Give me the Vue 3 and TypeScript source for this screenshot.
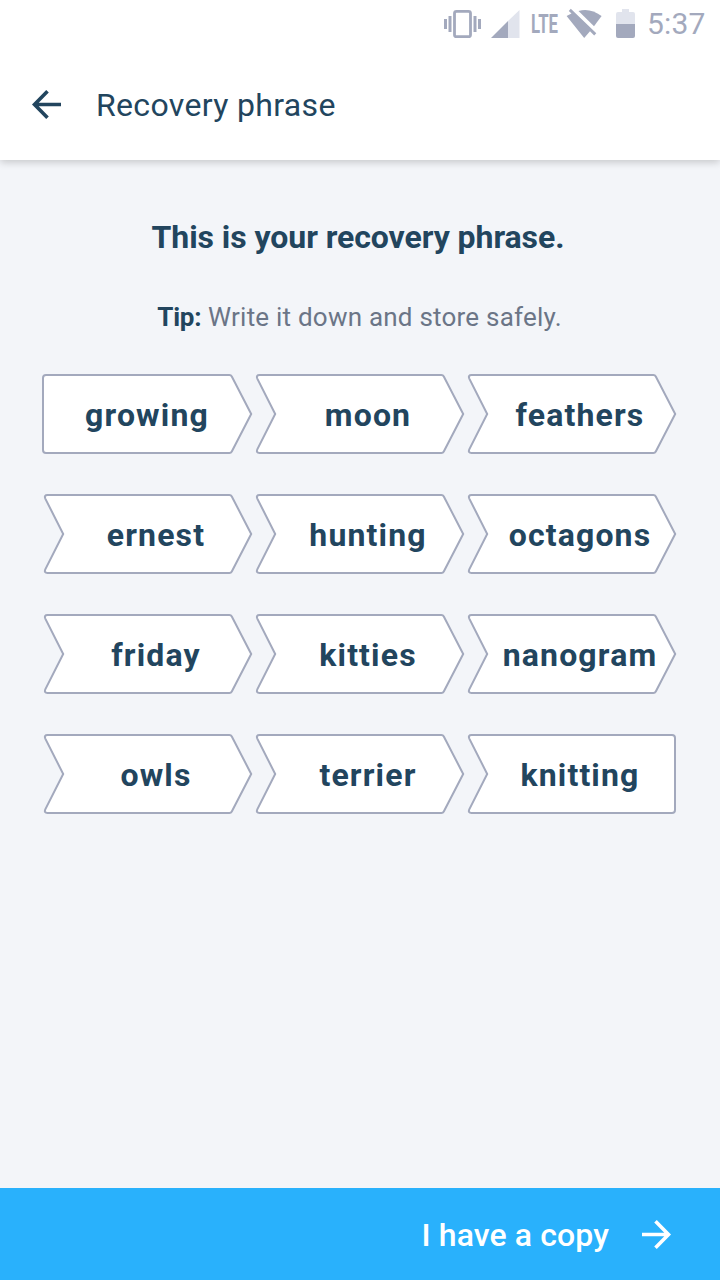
<script setup lang="ts">
interface Chip {
  word: string
  kind: 'first' | 'middle' | 'last'
}

const words: string[] = [
  'growing', 'moon', 'feathers',
  'ernest', 'hunting', 'octagons',
  'friday', 'kitties', 'nanogram',
  'owls', 'terrier', 'knitting',
]

const chips: Chip[] = words.map((word, i) => ({
  word,
  kind: i === 0 ? 'first' : i === words.length - 1 ? 'last' : 'middle',
}))

const outlines: Record<Chip['kind'], string> = {
  first: 'M4 1H187.4Q189 1 189.8 2.5L209.2 40L189.8 77.5Q189 79 187.4 79H4Q1 79 1 76V4Q1 1 4 1Z',
  middle: 'M5.5 1H187.4Q189 1 189.8 2.5L209.2 40L189.8 77.5Q189 79 187.4 79H5.5Q1.8 79 3.3 75.4L21.2 40L3.3 4.6Q1.8 1 5.5 1Z',
  last: 'M5.5 1H206Q209 1 209 4V76Q209 79 206 79H5.5Q1.8 79 3.3 75.4L21.2 40L3.3 4.6Q1.8 1 5.5 1Z',
}
</script>

<template>
  <div class="screen">
    <header class="top">
      <div class="status">
        <svg class="status-icons" width="200" height="48" viewBox="440 0 200 48">
          <g fill="#a3a9bd">
            <rect x="444" y="19" width="3" height="10" />
            <rect x="448.5" y="16" width="3" height="16" />
            <rect x="473.5" y="16" width="3" height="16" />
            <rect x="478" y="19" width="3" height="10" />
            <path d="M491 38L508 21V38Z" />
            <path d="M616 24H635V36Q635 38 633 38H618Q616 38 616 36Z" />
            <path d="M568.800 11L570.800 8.800L596.300 33.300L594.200 35.500L590 31.300L584.200 38L566.600 16L571.500 13.500Z" />
            <path d="M578.500 11Q590 7.500 601.600 16L594 26.300Z" />
          </g>
          <rect x="454.500" y="11.300" width="16" height="25.400" rx="2" fill="#fff" stroke="#a3a9bd" stroke-width="2.800" />
          <path d="M508 21L519.500 10V38H508Z" fill="#e1e4ed" />
          <path d="M616 24V14Q616 12 618 12H622V9H629V12H633Q635 12 635 14V24Z" fill="#e1e4ed" />
          <text x="531" y="33" textLength="27" lengthAdjust="spacingAndGlyphs" class="network">LTE</text>
        </svg>
        <time class="clock">5:37</time>
      </div>
      <div class="bar">
        <svg class="back" width="32" height="32" viewBox="0 0 32 32">
          <path d="M31 16.500H5M17.500 3.200L4.500 16.500L17.500 29.800" />
        </svg>
        <span class="title">Recovery phrase</span>
      </div>
    </header>

    <main class="content">
      <h1 class="heading">This is your recovery phrase.</h1>
      <p class="tip"><strong>Tip:</strong> Write it down and store safely.</p>
      <div class="phrase">
        <div v-for="chip in chips" :key="chip.word" class="chip" :class="chip.kind">
          <svg class="outline" width="212" height="80" viewBox="0 0 212 80">
            <path :d="outlines[chip.kind]" />
          </svg>
          <span class="word">{{ chip.word }}</span>
        </div>
      </div>
    </main>

    <button class="confirm" type="button">
      <span>I have a copy</span>
      <svg class="next" width="32" height="32" viewBox="0 0 32 32">
        <path d="M2 16.500H28M15.500 3.200L28.500 16.500L15.500 29.800" />
      </svg>
    </button>
  </div>
</template>

<style>
body {
  margin: 0;
}
</style>

<style scoped>
.screen {
  width: 720px;
  height: 1280px;
  display: flex;
  flex-direction: column;
  background: #f3f5f9;
  color: #22455e;
  font-family: Roboto, "Liberation Sans", sans-serif;
  overflow: hidden;
}
.top {
  height: 160px;
  flex: none;
  background: #fff;
  box-shadow: 0 2px 8px rgba(0, 0, 0, 0.2);
}
.status {
  height: 48px;
  display: flex;
  align-items: center;
  padding-left: 440px;
}
.status-icons {
  flex: none;
}
.network {
  font-size: 25px;
  font-weight: 700;
  fill: #a3a9bd;
}
.clock {
  margin-left: 7px;
  font-size: 30px;
  line-height: 48px;
  letter-spacing: 0.2px;
  color: #a3a9bd;
}
.bar {
  height: 112px;
  display: flex;
  align-items: center;
  padding-left: 30px;
}
.back,
.next {
  flex: none;
  fill: none;
  stroke: #22455e;
  stroke-width: 3.6;
}
.title {
  margin-left: 34px;
  padding-top: 2px;
  font-size: 32px;
  line-height: 48px;
  letter-spacing: 0.34px;
}
.content {
  flex: 1;
}
.heading {
  margin: 53px 4px 0 0;
  font-size: 32px;
  line-height: 48px;
  font-weight: 700;
  letter-spacing: -0.07px;
  text-align: center;
}
.tip {
  margin: 36px 1px 0 0;
  font-size: 26px;
  line-height: 40px;
  text-align: center;
  color: #6b7587;
  letter-spacing: 0.22px;
}
.tip strong {
  color: #22455e;
  font-weight: 700;
  letter-spacing: -0.2px;
}
.phrase {
  margin: 37px 0 0 42px;
  display: grid;
  grid-template-columns: repeat(3, 212px);
  row-gap: 40px;
}
.chip {
  height: 80px;
  display: grid;
}
.outline,
.word {
  grid-area: 1 / 1;
}
.outline {
  fill: #fff;
  stroke: #a3a9bd;
  stroke-width: 2;
}
.word {
  z-index: 1;
  padding-left: 16px;
  font-size: 32px;
  line-height: 82px;
  font-weight: 700;
  letter-spacing: 1.15px;
  text-align: center;
}
.first .word {
  padding: 0 2px 0 0;
}
.confirm {
  height: 92px;
  flex: none;
  display: flex;
  align-items: center;
  justify-content: flex-end;
  padding: 0 48px 0 0;
  border: 0;
  background: #29b1fc;
  color: #fff;
  font-family: inherit;
  font-size: 32px;
  line-height: 48px;
  font-weight: 500;
  letter-spacing: 0.1px;
}
.confirm span {
  padding-top: 2px;
}
.next {
  margin-left: 31px;
  stroke: #fff;
}
</style>
